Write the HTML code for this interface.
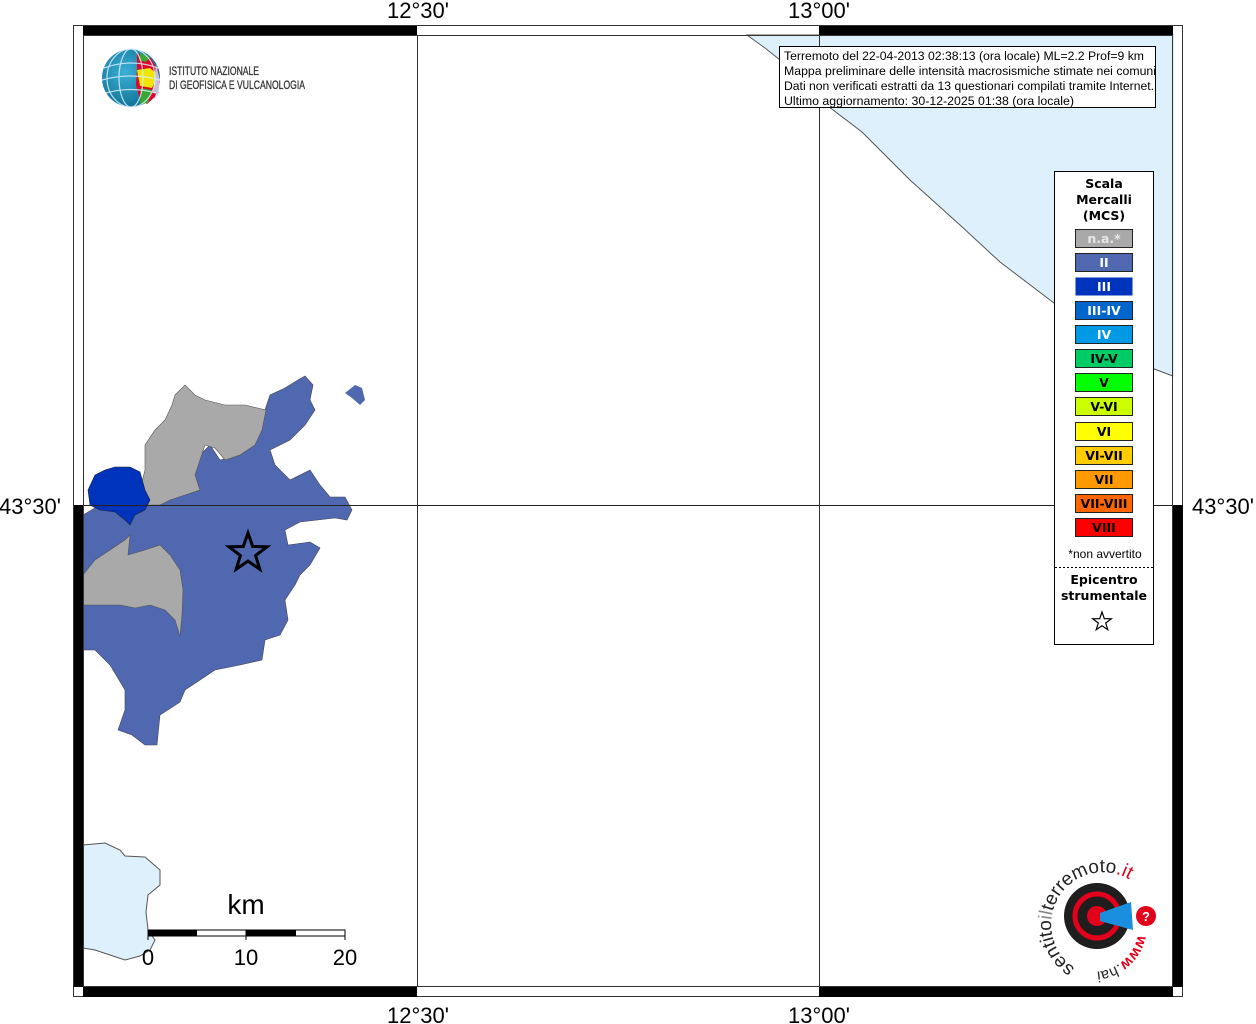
<!DOCTYPE html>
<html><head><meta charset="utf-8"><style>
html,body{margin:0;padding:0;background:#fff;width:1256px;height:1024px;overflow:hidden}
svg{display:block}
text{font-family:"Liberation Sans",sans-serif}
.lg{font-family:"DejaVu Sans",sans-serif;font-weight:bold;font-size:12.5px;text-anchor:middle}
</style></head><body>
<svg width="1256" height="1024" viewBox="0 0 1256 1024" xmlns="http://www.w3.org/2000/svg">
<path d="M747,35 L1173,35 L1173,376 L1130,360 L1090,330 L1050,300 L1000,262 L960,225 L910,180 L862,132 L820,100 L790,68 L765,48 Z" fill="#dff0fd" stroke="#555" stroke-width="1"/>
<rect x="1172" y="35" width="2" height="342" fill="#dff0fd"/>
<path d="M83,845 L105,843 L120,850 L125,856 L145,857 L160,870 L160,885 L148,895 L146,912 L148,930 L155,940 L150,950 L140,956 L125,960 L110,955 L95,950 L83,948 Z" fill="#dff0fd" stroke="#555" stroke-width="1"/>
<path d="M83,515 L95,508 L120,512 L140,500 L160,500 L185,495 L200,490 L195,475 L200,455 L210,445 L220,460 L240,455 L262,430 L265,410 L270,395 L285,388 L298,380 L305,376 L313,385 L310,400 L315,410 L305,425 L290,440 L270,450 L275,465 L290,480 L310,470 L320,485 L330,497 L345,497 L352,510 L347,520 L335,518 L300,522 L285,530 L288,545 L310,542 L320,548 L310,565 L300,575 L295,585 L285,600 L288,620 L280,635 L265,640 L262,660 L240,665 L215,670 L200,680 L185,690 L180,702 L160,715 L157,745 L145,745 L132,735 L118,730 L125,710 L125,690 L110,665 L95,650 L83,650 Z" fill="#5068b0" stroke="#445" stroke-width="0.6"/>
<path d="M345,393 L355,385 L362,388 L365,400 L360,405 L352,398 Z" fill="#5068b0"/>
<path d="M175,395 L185,385 L195,395 L205,400 L225,405 L245,405 L266,410 L262,430 L255,445 L240,455 L225,460 L215,448 L205,445 L200,460 L195,475 L200,490 L185,495 L170,500 L160,505 L148,505 L140,490 L145,470 L145,445 L155,430 L165,420 L172,405 Z" fill="#a9a9a9" stroke="#555" stroke-width="0.6"/>
<path d="M83,575 L95,560 L110,550 L125,540 L130,535 L128,555 L145,550 L160,545 L170,555 L180,570 L183,590 L182,615 L180,636 L175,620 L165,610 L150,605 L135,608 L120,605 L100,605 L83,605 Z" fill="#a9a9a9" stroke="#555" stroke-width="0.6"/>
<path d="M95,475 L105,470 L115,467 L130,467 L140,472 L145,490 L150,500 L145,510 L135,515 L130,525 L125,520 L115,512 L100,510 L90,505 L88,490 Z" fill="#0033bb" stroke="#223" stroke-width="0.6"/>
<line x1="417.5" y1="35" x2="417.5" y2="987" stroke="#333" stroke-width="1"/>
<line x1="819.5" y1="35" x2="819.5" y2="987" stroke="#333" stroke-width="1"/>
<line x1="83" y1="505.5" x2="1173" y2="505.5" stroke="#222" stroke-width="1"/>
<rect x="73.5" y="25.5" width="1109" height="971" fill="none" stroke="#333" stroke-width="1"/>
<rect x="83.5" y="35.5" width="1089" height="951" fill="none" stroke="#333" stroke-width="1"/>
<rect x="83" y="26" width="334" height="9" fill="#000"/>
<rect x="819" y="26" width="354" height="9" fill="#000"/>
<rect x="83" y="987" width="334" height="10" fill="#000"/>
<rect x="819" y="987" width="354" height="10" fill="#000"/>
<rect x="74" y="505" width="9" height="482" fill="#000"/>
<rect x="1173" y="505" width="10" height="482" fill="#000"/>
<g font-size="22" fill="#000">
<text x="418" y="18" text-anchor="middle">12°30'</text>
<text x="819" y="18" text-anchor="middle">13°00'</text>
<text x="418" y="1023" text-anchor="middle">12°30'</text>
<text x="819" y="1023" text-anchor="middle">13°00'</text>
<text x="-1" y="514">43°30'</text>
<text x="1192" y="514">43°30'</text>
</g>
<polygon points="248,533 252.7,546.5 267,546.8 255.6,555.5 259.8,569.2 248,561 236.2,569.2 240.4,555.5 229,546.8 243.3,546.5" fill="none" stroke="#000" stroke-width="3"/>
<rect x="148" y="930" width="197" height="6" fill="#fff" stroke="#000" stroke-width="1"/>
<rect x="148" y="930" width="49" height="6" fill="#000"/>
<rect x="246" y="930" width="50" height="6" fill="#000"/>
<line x1="148" y1="930" x2="148" y2="940" stroke="#000"/>
<line x1="246" y1="930" x2="246" y2="940" stroke="#000"/>
<line x1="345" y1="930" x2="345" y2="940" stroke="#000"/>
<g font-size="22" text-anchor="middle"><text x="148" y="965">0</text><text x="246" y="965">10</text><text x="345" y="965">20</text></g>
<text x="246" y="914" font-size="28" text-anchor="middle">km</text>
<rect x="779.5" y="46.5" width="376" height="61" fill="#fff" stroke="#000"/>
<g font-size="12.2" fill="#000">
<text x="784" y="60" textLength="360" lengthAdjust="spacingAndGlyphs">Terremoto del 22-04-2013 02:38:13 (ora locale) ML=2.2 Prof=9 km</text>
<text x="784" y="75" textLength="372" lengthAdjust="spacingAndGlyphs">Mappa preliminare delle intensità macrosismiche stimate nei comuni</text>
<text x="784" y="90" textLength="370" lengthAdjust="spacingAndGlyphs">Dati non verificati estratti da 13 questionari compilati tramite Internet.</text>
<text x="784" y="105" textLength="290" lengthAdjust="spacingAndGlyphs">Ultimo aggiornamento: 30-12-2025 01:38 (ora locale)</text>
</g>
<rect x="1054.5" y="171.5" width="99" height="473" fill="#fff" stroke="#000"/>
<text class="lg" x="1104" y="188">Scala</text>
<text class="lg" x="1104" y="204">Mercalli</text>
<text class="lg" x="1104" y="220">(MCS)</text>
<g stroke="#222" stroke-width="1">
<rect x="1075.5" y="229.5" width="57" height="18" fill="#a9a9a9"/>
<rect x="1075.5" y="253.5" width="57" height="18" fill="#5068b0"/>
<rect x="1075.5" y="277.5" width="57" height="18" fill="#0033bb" stroke="none"/>
<rect x="1075.5" y="301.5" width="57" height="18" fill="#0066cc"/>
<rect x="1075.5" y="325.5" width="57" height="18" fill="#0099e6"/>
<rect x="1075.5" y="349.5" width="57" height="18" fill="#00cc66"/>
<rect x="1075.5" y="373.5" width="57" height="18" fill="#00ff00"/>
<rect x="1075.5" y="397.5" width="57" height="18" fill="#ccff00"/>
<rect x="1075.5" y="422.5" width="57" height="18" fill="#ffff00"/>
<rect x="1075.5" y="446.5" width="57" height="18" fill="#ffcc00"/>
<rect x="1075.5" y="470.5" width="57" height="18" fill="#ff9900"/>
<rect x="1075.5" y="494.5" width="57" height="18" fill="#ff6600"/>
<rect x="1075.5" y="518.5" width="57" height="18" fill="#ff0000"/>
</g>
<text class="lg" x="1104" y="243" fill="#e8e8e8">n.a.*</text>
<text class="lg" x="1104" y="267" fill="#fff">II</text>
<text class="lg" x="1104" y="291" fill="#fff">III</text>
<text class="lg" x="1104" y="315" fill="#fff">III-IV</text>
<text class="lg" x="1104" y="339" fill="#fff">IV</text>
<text class="lg" x="1104" y="363">IV-V</text>
<text class="lg" x="1104" y="387">V</text>
<text class="lg" x="1104" y="411">V-VI</text>
<text class="lg" x="1104" y="436">VI</text>
<text class="lg" x="1104" y="460">VI-VII</text>
<text class="lg" x="1104" y="484">VII</text>
<text class="lg" x="1104" y="508">VII-VIII</text>
<text class="lg" x="1104" y="532">VIII</text>
<text x="1105" y="558" font-family="DejaVu Sans,sans-serif" font-size="12" text-anchor="middle">*non avvertito</text>
<line x1="1055" y1="567.5" x2="1153" y2="567.5" stroke="#000" stroke-dasharray="2,2"/>
<text class="lg" x="1104" y="584">Epicentro</text>
<text class="lg" x="1104" y="600">strumentale</text>
<polygon points="1102,612 1104.3,618.6 1111.3,618.8 1105.7,623 1107.8,629.7 1102,625.7 1096.2,629.7 1098.3,623 1092.7,618.8 1099.7,618.6" fill="none" stroke="#000" stroke-width="1.2"/>
<defs><radialGradient id="gl" cx="0.4" cy="0.4" r="0.7"><stop offset="0" stop-color="#3bb0d8"/><stop offset="1" stop-color="#0b6a8e"/></radialGradient></defs>
<circle cx="131" cy="78" r="29" fill="url(#gl)"/>
<path d="M137,53 L150,57 L158,70 L160,82 L155,97 L147,104 L140,100 L136,85 L137,70 Z" fill="#e3002b"/>
<path d="M137,70 L150,68 L158,75 L152,88 L140,86 Z" fill="#f2e600"/>
<path d="M141,88 L152,90 L148,103 L140,104 Z" fill="#3aa835"/>
<path d="M140,53 L150,57 L146,62 L139,60 Z" fill="#3aa835"/>
<path d="M156,64 L160,80 L158,95 L153,92 Z" fill="#c9c0d8"/>
<g stroke="#d8f0fa" stroke-width="1.2" fill="none" opacity="0.85">
<ellipse cx="131" cy="78" rx="12" ry="29"/><ellipse cx="131" cy="78" rx="24" ry="29"/>
<path d="M104,68 Q131,58 158,68"/><path d="M102,80 Q131,72 160,80"/><path d="M106,93 Q131,86 156,93"/>
</g>
<g font-family="Liberation Sans Narrow,Liberation Sans,sans-serif" font-size="12" fill="#333" stroke="#333" stroke-width="0.3">
<text x="169" y="75" textLength="90" lengthAdjust="spacingAndGlyphs">ISTITUTO NAZIONALE</text>
<text x="169" y="89" textLength="136" lengthAdjust="spacingAndGlyphs">DI GEOFISICA E VULCANOLOGIA</text>
</g>
<circle cx="1097" cy="916" r="33" fill="#1e1e1e"/>
<circle cx="1097" cy="916" r="22" fill="none" stroke="#e3001b" stroke-width="5"/>
<circle cx="1097" cy="916" r="10" fill="#e3001b"/>
<path d="M1100,913 L1131,902 L1133,930 L1100,921 Z" fill="#1a8fde"/>
<circle cx="1146" cy="916" r="10" fill="#e3001b"/>
<text x="1146" y="921" font-size="13" font-weight="bold" fill="#fff" text-anchor="middle">?</text>
<defs><path id="arc" d="M1075,968 A52,52 0 1 1 1148,898"/><path id="arc2" d="M1138,935 A46,46 0 0 1 1080,970"/></defs>
<text font-size="19" fill="#222" font-family="DejaVu Sans,sans-serif"><textPath href="#arc">sentito<tspan fill="#888">il</tspan>terremoto<tspan fill="#e3001b">.it</tspan></textPath></text>
<text font-size="15" font-weight="bold" fill="#e3001b" font-family="DejaVu Sans,sans-serif"><textPath href="#arc2">www<tspan fill="#222" font-weight="normal">.hai</tspan></textPath></text>
</svg>
</body></html>
